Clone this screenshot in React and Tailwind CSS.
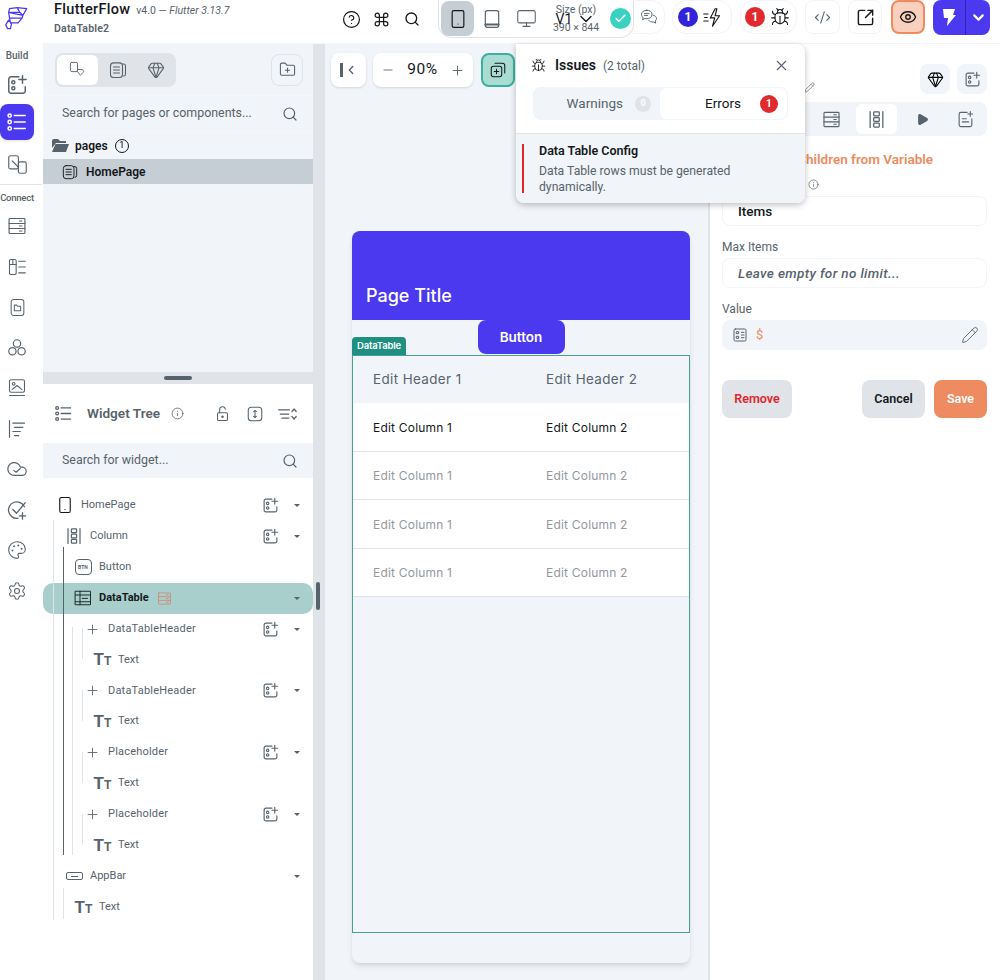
import React from "react";
import { Bug, ChevronDown, CircleHelp, CodeXml, Command, Eye, Gem, Minus, Monitor, Palette, Play, Plus, Search, Settings, Smartphone, Check, X, Info, Pencil, FolderPlus, SquareArrowOutUpRight } from "lucide-react";

const S = ({ size = 24, w = 1.6, className = "", children }) => (
  <svg width={size} height={size} viewBox="0 0 24 24" fill="none" stroke="currentColor" strokeWidth={w} strokeLinecap="round" strokeLinejoin="round" className={className}>{children}</svg>
);
const AddWidget = ({ size = 22, className = "text-[#57636c]" }) => (
  <S size={size} className={className}>
    <path d="M14 3H5.5A2.5 2.5 0 0 0 3 5.5v13A2.5 2.5 0 0 0 5.5 21h13a2.5 2.5 0 0 0 2.5-2.5V14" />
    <circle cx="8" cy="9" r="1.7" /><circle cx="8" cy="15.5" r="1.7" />
    <path d="M18 2v8M14 6h8" />
  </S>
);
const TreeList = ({ size = 24, className = "" }) => (
  <S size={size} className={className}>
    <circle cx="4" cy="5" r="1.8" /><circle cx="4" cy="12" r="1.8" /><circle cx="4" cy="19" r="1.8" />
    <path d="M9 5h12M9 12h12M9 19h12" />
  </S>
);
const Stack = ({ size = 24, className = "text-[#57636c]" }) => (
  <S size={size} className={className} w={1.4}>
    <rect x="2.5" y="3" width="19" height="18" rx="1" />
    <path d="M2.5 9h19M2.5 15h19M15 6h3M15 12h3M15 18h3" />
  </S>
);
const ColumnIcon = ({ size = 24, className = "text-[#57636c]" }) => (
  <S size={size} className={className}>
    <path d="M4 2v20M20 2v20" />
    <rect x="8.5" y="2.5" width="7" height="5" rx="1" /><rect x="8.5" y="9.5" width="7" height="5" rx="1" /><rect x="8.5" y="16.5" width="7" height="5" rx="1" />
  </S>
);
const PageDoc = ({ size = 18, className = "" }) => (
  <S size={size} w={1.4} className={className}>
    <path d="M18 4h1.5A2.5 2.5 0 0 1 22 6.5v11a2.5 2.5 0 0 1-2.5 2.5" />
    <rect x="2" y="2.5" width="16" height="19.5" rx="4" />
    <path d="M6 8h8M6 12h8M6 16h8" />
  </S>
);
const Tt = () => (
  <span className="flex w-[17px] items-baseline font-['Liberation_Sans',sans-serif] font-bold leading-none text-[#57636c]">
    <span className="text-[17px]">T</span><span className="text-[12px]">T</span>
  </span>
);
const Caret = () => <span className="h-0 w-0 border-x-[3px] border-t-[3px] border-x-transparent border-t-[#57636c]" />;
const Cell40 = ({ children }) => <div className="flex h-[40.5px] items-center">{children}</div>;

const Rail = () => (
  <aside className="flex w-[42px] shrink-0 flex-col items-center bg-white pr-[8px]">
    <div className="mr-[-8px] h-[44px] w-[42px] shrink-0 text-[#4b39ef]">
      <svg width="42" height="44" viewBox="0 0 44 44" fill="none" stroke="currentColor" strokeWidth="1.3" strokeLinejoin="round">
        <path d="M10 8l8-1 3 5H9ZM18 7l10 1-4 7-3-3ZM9 12l15 3-1 3H10ZM10 18h13l-4 5-8 0ZM9 20l3 4-1 5-3 0-2-4Z" />
      </svg>
    </div>
    <div className="mt-[5px] text-[10px] font-medium leading-[14px] text-[#57636c]">Build</div>
    <div className="mt-[3px] flex h-[38px] items-center"><AddWidget size={22} /></div>
    <div className="flex h-[36px] w-[34px] shrink-0 items-center justify-center rounded-lg bg-[#4b39ef] text-white shadow"><TreeList size={22} /></div>
    <div className="mt-[4px] flex h-[40px] items-center text-[#57636c]">
      <S size={21} w={1.3}><rect x="2" y="2" width="11" height="15" rx="2" /><rect x="13" y="9" width="9" height="13" rx="2" /><path d="M6 8l7 7" /></S>
    </div>
    <div className="mr-[-8px] w-[42px] shrink-0 border-t border-[#e0e3e7] pr-[8px] pt-[6px] text-center text-[9.5px] font-medium leading-[14px] tracking-tight text-[#57636c]">Connect</div>
    <div className="mt-[1px] flex flex-col items-center text-[#57636c]">
      <Cell40><Stack size={20} /></Cell40>
      <Cell40>
        <S size={20} w={1.3}><rect x="3" y="3" width="8" height="18" rx="1.5" /><path d="M3 9h8M7 3v6M14 5h8M14 12h8M14 19h8" /></S>
      </Cell40>
      <Cell40>
        <S size={19} w={1.3}><rect x="4" y="2" width="16" height="20" rx="3" /><path d="M8 9h3l1 1.5h4V16H8Z" /></S>
      </Cell40>
      <Cell40>
        <S size={22} w={1.3}><circle cx="12" cy="7" r="4" /><circle cx="7" cy="15.5" r="4" /><circle cx="17" cy="15.5" r="4" /></S>
      </Cell40>
      <Cell40>
        <S size={20} w={1.3}><rect x="3" y="2" width="18" height="15" rx="2" /><circle cx="8" cy="7" r="1.6" /><path d="M6 14l6-5 6 5M3 21h18" /></S>
      </Cell40>
      <Cell40>
        <S size={20} w={1.4}><path d="M3 2v20M7 5h14M9 10h10M7 15h9M9 20h5" /></S>
      </Cell40>
      <Cell40>
        <S size={22} w={1.3}><path d="M17.5 19H9a7 7 0 1 1 6.71-9h1.79a4.5 4.5 0 1 1 0 9Z" /><path d="m8.5 13.5 2.5 2 4.5-4" /></S>
      </Cell40>
      <Cell40>
        <S size={22} w={1.4}><path d="M20 8.5A9 9 0 1 0 13 21" /><path d="m7.5 11.5 4 4L21 4M18 15v7M14.5 18.5h7" /></S>
      </Cell40>
      <Cell40><Palette size={20} strokeWidth={1.3} /></Cell40>
      <Cell40><Settings size={20} strokeWidth={1.3} /></Cell40>
    </div>
  </aside>
);

const PillBase = ({ className = "", children }) => (
  <div className={`flex h-[34px] items-center rounded-[14px] border border-[#f1f4f8] ${className}`}>{children}</div>
);
const Num = ({ color, children }) => (
  <span className={`flex h-[20px] w-[20px] items-center justify-center rounded-full text-[12px] font-bold text-white ${color}`}>{children}</span>
);

const Header = () => (
  <header className="flex h-[44px] shrink-0 items-start border-b border-[#f1f4f8] bg-white text-[#14181b]">
    <div className="w-[300px] pl-[12px] pt-[1px]">
      <div className="flex items-baseline gap-[6px] leading-[18px]">
        <span className="text-[14.5px] font-medium tracking-[0.3px]">FlutterFlow</span>
        <span className="text-[10.5px] text-[#57636c]">v4.0 — <i>Flutter 3.13.7</i></span>
      </div>
      <div className="mt-[2px] text-[10.5px] font-semibold leading-[14px] tracking-[0.2px] text-[#57636c]">DataTable2</div>
    </div>
    <div className="flex h-[38px] items-center">
      <CircleHelp size={19} strokeWidth={1.5} />
      <Command size={17} strokeWidth={1.7} className="ml-[12px]" />
      <Search size={16} strokeWidth={2} className="ml-[14px]" />
    </div>
    <div className="ml-[18px] flex h-[38px] w-[196px] items-center rounded-b-[14px] border border-t-0 border-[#e0e3e7] pl-[2px]">
      <div className="flex h-[35px] w-[33px] items-center justify-center rounded-lg bg-[#c5cdd5]"><Smartphone size={20} strokeWidth={1.4} /></div>
      <div className="ml-[8px] text-[#57636c]">
        <S size={20} w={1.4}><rect x="4" y="2" width="16" height="20" rx="2.5" /><path d="M4 18.5h16" strokeWidth="2.5" /></S>
      </div>
      <Monitor size={21} strokeWidth={1.2} className="ml-[14px] text-[#57636c]" />
      <div className="relative ml-[12px] w-[54px] text-center text-[10.5px] leading-[10px] text-[#57636c]">
        <div>Size (px)</div>
        <div className="mt-[8px] whitespace-nowrap">390 × 844</div>
        <div className="absolute left-0 top-[4px] flex w-full items-center justify-center gap-[2px] text-[14px] leading-[14px] text-[#14181b]">
          <span className="mr-[2px]">V1</span><ChevronDown size={20} strokeWidth={1.6} />
        </div>
      </div>
      <div className="ml-[7px] flex h-[21px] w-[21px] items-center justify-center rounded-full bg-[#39d2c0] text-white"><Check size={13} strokeWidth={3} /></div>
    </div>
    <div className="ml-[-1px] flex h-[34px] w-[32px] items-center justify-center rounded-r-[14px] border-y border-r border-[#f1f4f8] text-[#57636c]">
      <S size={18} w={1.3}><path d="M9 3c-4 0-7 2.4-7 5.5 0 1.6.8 3 2 4l-.5 3 3-1.5c.8.2 1.6.3 2.5.3 4 0 7-2.4 7-5.8S13 3 9 3Z" /><path d="M17.5 9.5c2.6.6 4.5 2.4 4.5 4.5 0 1.2-.6 2.3-1.6 3.1l.4 3-3-1.5c-2.6.4-5-.5-6.3-2.2M6 7.5h6M6 10h4" /></S>
    </div>
    <PillBase className="ml-[7px] w-[60px] gap-[4px] pl-[5px]">
      <Num color="bg-[#3323d8]">1</Num>
      <S size={21} w={1.3}><path d="M15 2 9.5 12.5h5L12 22l8-12h-5l2-8ZM2 8h5M3 12h3M2 16h5" /></S>
    </PillBase>
    <PillBase className="ml-[8px] w-[57px] gap-[5px] pl-[4px]">
      <Num color="bg-[#e02a2e]">1</Num>
      <Bug size={20} strokeWidth={1.3} />
    </PillBase>
    <div className="ml-[8px] flex h-[34px] w-[35px] items-center justify-center rounded-lg border border-[#f1f4f8] text-[#57636c]"><CodeXml size={17} strokeWidth={1.5} /></div>
    <div className="ml-[8px] flex h-[34px] w-[34px] items-center justify-center rounded-lg border border-[#f1f4f8]"><SquareArrowOutUpRight size={19} strokeWidth={1.8} /></div>
    <div className="ml-[9px] flex h-[34px] w-[34px] items-center justify-center rounded-lg border-2 border-[#ee8b60] bg-[#f8d0bd]"><Eye size={18} strokeWidth={1.8} /></div>
    <div className="ml-[8px] flex h-[35px] w-[57px] items-center rounded-lg bg-[#4b39ef] text-white">
      <div className="flex h-full w-[33px] items-center justify-center border-r border-[#2f22b8]">
        <svg width="14" height="19" viewBox="0 0 14 19" fill="currentColor"><path d="M1 1h12l-2 6h3L5 18l1-8H2Z" /></svg>
      </div>
      <div className="flex flex-1 items-center justify-center"><ChevronDown size={17} strokeWidth={3} /></div>
    </div>
  </header>
);

const SearchRow = ({ text }) => (
  <div className="flex h-[35px] items-center justify-between bg-[#f1f4f8] pl-[19px] pr-[15px] text-[12.4px] text-[#57636c]">
    <span>{text}</span><Search size={16} strokeWidth={1.8} />
  </div>
);

const PagesPanel = () => (
  <div className="flex h-[328px] shrink-0 flex-col bg-[#f1f4f8]">
    <div className="flex h-[52px] items-center justify-between border-b border-[#f5f7fa] pl-[12px] pr-[10px]">
      <div className="flex h-[34px] w-[121px] items-center rounded-lg bg-[#e0e3e7] p-[2px] text-[#57636c]">
        <div className="flex h-[30px] w-[41px] items-center justify-center rounded-md bg-white">
          <S size={17} w={1.3}><rect x="2" y="2" width="10" height="13" rx="2" /><path d="M12 15l4 5 5-5-2-3h-6Z" /></S>
        </div>
        <PageDoc size={18} className="ml-[11px]" />
        <Gem size={18} strokeWidth={1.4} className="ml-[20px]" />
      </div>
      <div className="flex h-[32px] w-[32px] items-center justify-center rounded-lg border border-[#e0e3e7] text-[#57636c]"><FolderPlus size={17} strokeWidth={1.5} /></div>
    </div>
    <SearchRow text="Search for pages or components..." />
    <div className="flex h-[28px] items-center border-t border-[#f5f7fa] pl-[8px]">
      <svg width="18" height="16" viewBox="0 0 18 16"><path d="M1 3a2 2 0 0 1 2-2h4l2 2h6v2H5L1 10Z" fill="#57636c" /><path d="M4.5 6H18l-3 8H1Z" fill="#57636c" /></svg>
      <span className="ml-[6px] text-[12px] font-semibold text-[#14181b]">pages</span>
      <span className="ml-[7px] flex h-[14px] w-[14px] items-center justify-center rounded-full border border-[#14181b] text-[9px]">1</span>
    </div>
    <div className="flex h-[25px] items-center bg-[#c5cdd5] pl-[19px]">
      <PageDoc size={16} className="text-[#14181b]" />
      <span className="ml-[8px] text-[12px] font-semibold text-[#14181b]">HomePage</span>
    </div>
  </div>
);

const Row = ({ icon, label, indent, add, caret, active, bold, badge, small }) => (
  <div className={`flex h-[30.9px] items-center pr-[13px] ${active ? "rounded-[10px] bg-[#a9cfcc]" : ""}`} style={{ paddingLeft: indent }}>
    <div className="flex w-[18px] shrink-0 items-center justify-center">{icon}</div>
    <span className={`ml-[7px] text-[11px] ${bold ? "font-bold text-[#14181b]" : "text-[#57636c]"} ${small ? "tracking-[0.2px]" : ""}`}>{label}</span>
    {badge && <Stack size={15} className="ml-[8px] text-[#c98c76]" />}
    <div className="ml-auto flex items-center">
      {add && <AddWidget size={17} />}
      <div className="flex w-[21px] justify-end">{caret && <Caret />}</div>
    </div>
  </div>
);

const Tree = () => (
  <div className="flex-1 bg-white">
    <div className="flex h-[59px] items-center pl-[11px] pr-[16px] text-[#57636c]">
      <TreeList size={19} />
      <span className="ml-[14px] text-[13.6px] font-semibold">Widget Tree</span>
      <Info size={13} strokeWidth={1.5} className="ml-[11px]" />
      <S size={17} w={1.5} className="ml-[30px]">
        <rect x="5" y="11" width="14" height="11" rx="1.5" /><path d="M8 11V7a4 4 0 0 1 8-1" /><circle cx="12" cy="16.5" r="1" fill="currentColor" />
      </S>
      <S size={18} w={1.4} className="ml-[15px]">
        <rect x="3" y="3" width="18" height="18" rx="4" /><path d="M12 7v10M10 9l2-2 2 2M10 15l2 2 2-2" />
      </S>
      <S size={20} w={1.5} className="ml-auto">
        <path d="M2 7h13M4 12h10M6 17h8M18 9l2.5-3L23 9M18 15l2.5 3 2.5-3" />
      </S>
    </div>
    <SearchRow text="Search for widget..." />
    <div className="relative mt-[12px]">
      <div className="absolute left-[10px] top-[30px] h-[400px] w-px bg-[#e0e3e7]" />
      <div className="absolute left-[20px] top-[57px] z-10 h-[308px] w-px bg-[#57636c]" />
      <div className="absolute left-[29px] top-[137px] h-[228px] w-px bg-[#e0e3e7]" />
      <div className="absolute left-[20px] top-[398px] h-[31px] w-px bg-[#e0e3e7]" />
      {[138, 200, 262, 324].map((t) => (
        <div key={t} className="absolute left-[39px] h-[31px] w-px bg-[#e0e3e7]" style={{ top: t }} />
      ))}
      <Row indent={13} label="HomePage" add caret icon={<Smartphone size={20} strokeWidth={1.5} className="text-[#14181b]" />} />
      <Row indent={22} label="Column" add caret icon={<ColumnIcon size={18} />} />
      <Row indent={31} label="Button" icon={<span className="flex h-[16px] w-[17px] items-center justify-center rounded-[4px] border border-[#57636c] text-[5px] font-bold leading-none text-[#57636c]">BTN</span>} />
      <Row indent={31} label="DataTable" bold active caret badge icon={
        <S size={18} w={1.2} className="text-[#14181b]"><rect x="2" y="3" width="20" height="18" /><path d="M2 8h20M2 17h20M8 3v18M11 12.5h7" /></S>
      } />
      {["DataTableHeader", "DataTableHeader", "Placeholder", "Placeholder"].map((l, i) => (
        <React.Fragment key={i}>
          <Row indent={40} label={l} add caret small icon={<Plus size={15} strokeWidth={1.4} className="text-[#57636c]" />} />
          <Row indent={50} label="Text" icon={<Tt />} />
        </React.Fragment>
      ))}
      <Row indent={22} label="AppBar" caret icon={<span className="flex h-[8px] w-[17px] items-center justify-center rounded-[2px] border border-[#57636c]"><span className="h-px w-[7px] bg-[#57636c]" /></span>} />
      <Row indent={31} label="Text" icon={<Tt />} />
    </div>
  </div>
);

const LeftPanel = () => (
  <div className="flex w-[282px] shrink-0 bg-[#e0e3e7]">
    <div className="flex w-[270px] shrink-0 flex-col">
      <PagesPanel />
      <div className="flex h-[12px] shrink-0 items-center justify-center bg-[#e0e3e7]">
        <div className="h-[4px] w-[28px] rounded-full bg-[#57636c]" />
      </div>
      <Tree />
    </div>
    <div className="relative flex-1">
      <div className="absolute left-[3px] top-[538px] h-[28px] w-[4px] rounded-full bg-[#57636c]" />
    </div>
  </div>
);

const Cell = ({ children }) => <div className="w-[173px] shrink-0">{children}</div>;
const TableRow = ({ a, b, muted }) => (
  <div className={`flex h-[48.5px] items-center border-b border-[#e0e3e7] bg-white pl-[20px] pt-[2px] text-[12px] tracking-[0.2px] ${muted ? "text-[#94999f]" : "text-[#14181b]"}`}>
    <Cell>{a}</Cell><Cell>{b}</Cell>
  </div>
);

const Canvas = () => (
  <main className="flex w-[383px] shrink-0 flex-col bg-[#f1f4f8] pl-[6px] font-['Inter',sans-serif]">
    <div className="mt-[9px] flex items-center font-['Roboto',sans-serif]">
      <div className="flex h-[34px] w-[35px] items-center justify-center rounded-lg bg-white text-[#57636c] shadow-sm">
        <span className="h-[14px] w-[3px] bg-[#57636c]" />
        <S size={14} w={2.2} className="ml-[1px]"><path d="m15 6-6 6 6 6" /></S>
      </div>
      <div className="ml-[7px] flex h-[34px] w-[100px] items-center justify-between rounded-lg bg-white px-[8px] text-[#14181b] shadow-sm">
        <Minus size={14} strokeWidth={1.5} className="text-[#57636c]" />
        <span className="text-[15.5px] tracking-[0.5px]">90%</span>
        <Plus size={15} strokeWidth={1.5} className="text-[#57636c]" />
      </div>
      <div className="ml-[8px] flex h-[34px] w-[34px] items-center justify-center rounded-lg border-2 border-[#39b0a0] bg-[#a9dcd3] text-[#14181b]">
        <S size={18} w={1.4}><rect x="3" y="7" width="14" height="14" rx="3" /><path d="M8 3h10a3 3 0 0 1 3 3v10M10 11v6M7 14h6" /></S>
      </div>
    </div>
    <div className="ml-[21px] mt-[144px] flex h-[732px] w-[338px] flex-col rounded-lg bg-[#f1f4f8] shadow-md">
      <div className="flex h-[89px] shrink-0 items-end rounded-t-lg bg-[#4b39ef] pb-[12px] pl-[14px] text-[18px] font-medium leading-[24px] text-white">Page Title</div>
      <div className="relative h-[35px] shrink-0">
        <div className="mx-auto flex h-[34px] w-[87px] items-center justify-center rounded-lg bg-[#4b39ef] text-[13.5px] font-semibold text-white">Button</div>
        <div className="absolute bottom-0 left-0 flex h-[18px] w-[54px] items-center justify-center rounded-t bg-[#1e8f80] text-[9.5px] font-semibold tracking-[-0.2px] text-white">DataTable</div>
      </div>
      <div className="h-[578px] shrink-0 border-[1.5px] border-[#45a292]">
        <div className="flex h-[47px] items-center bg-[#f1f4f8] pl-[20px] text-[13.4px] tracking-[0.4px] text-[#57636c]">
          <Cell>Edit Header 1</Cell><Cell>Edit Header 2</Cell>
        </div>
        <TableRow a="Edit Column 1" b="Edit Column 2" />
        <TableRow a="Edit Column 1" b="Edit Column 2" muted />
        <TableRow a="Edit Column 1" b="Edit Column 2" muted />
        <TableRow a="Edit Column 1" b="Edit Column 2" muted />
      </div>
    </div>
  </main>
);

const Label = ({ children }) => <div className="text-[12px] leading-[16px] text-[#57636c]">{children}</div>;

const RightPanel = () => (
  <section className="flex-1 border-l-2 border-[#e0e3e7] bg-white pl-[12px] pr-[13px]">
    <div className="flex h-[58px] items-center justify-end gap-[7px] pt-[12px]">
      <Pencil size={11} strokeWidth={1.4} className="mr-[98px] mt-[16px] text-[#57636c]" />
      <div className="flex h-[30px] w-[30px] items-center justify-center rounded-lg bg-[#f1f4f8]"><Gem size={17} strokeWidth={1.6} /></div>
      <div className="flex h-[30px] w-[30px] items-center justify-center rounded-lg bg-[#f1f4f8]"><AddWidget size={17} /></div>
    </div>
    <div className="flex h-[34px] items-center justify-end rounded-lg bg-[#f1f4f8] pr-[12px] text-[#57636c]">
      <Stack size={19} />
      <div className="ml-[15px] flex h-[30px] w-[41px] items-center justify-center rounded-md bg-white"><ColumnIcon size={19} /></div>
      <Play size={13} fill="currentColor" className="ml-[19px]" />
      <S size={19} w={1.4} className="ml-[27px]"><path d="M14 3H6a2 2 0 0 0-2 2v14a2 2 0 0 0 2 2h12a2 2 0 0 0 2-2v-8M8 11h5M8 15h8M18 2v6M15 5h6" /></S>
    </div>
    <div className="mt-[15px] whitespace-nowrap pr-[54px] text-right text-[13.5px] font-semibold leading-[16px] text-[#ee8b60]">Generate Children from Variable</div>
    <div className="mt-[9px] flex h-[16px] items-center pl-[86px]">
      <Info size={11} strokeWidth={1.5} className="text-[#57636c]" />
    </div>
    <div className="mt-[4px] flex h-[30px] items-center rounded-lg border border-[#f1f4f8] pl-[15px] text-[13.5px] font-medium text-[#14181b]">Items</div>
    <div className="mt-[13px]"><Label>Max Items</Label></div>
    <div className="mt-[3px] flex h-[30px] items-center rounded-lg border border-[#f1f4f8] pl-[15px] text-[13.5px] font-medium italic tracking-[0.35px] text-[#57636c]">Leave empty for no limit...</div>
    <div className="mt-[13px]"><Label>Value</Label></div>
    <div className="mt-[3px] flex h-[30px] items-center rounded-lg bg-[#f1f4f8] pl-[10px] pr-[8px]">
      <S size={16} w={1.5} className="text-[#57636c]"><rect x="3" y="3" width="18" height="18" rx="2" /><path d="M7 7h3v3H7ZM7 14h3v3H7ZM14 8h4M14 12h4M14 16h4" /></S>
      <span className="ml-[8px] text-[13px] text-[#ee8b60]">$</span>
      <Pencil size={18} strokeWidth={1.2} className="ml-auto text-[#57636c]" />
    </div>
    <div className="mt-[30px] flex h-[38px] items-stretch text-[12.5px] font-semibold">
      <div className="flex w-[70px] items-center justify-center rounded-lg bg-[#e0e3e7] text-[#e0262c]">Remove</div>
      <div className="ml-auto flex w-[63px] items-center justify-center rounded-lg bg-[#e0e3e7] text-[#14181b]">Cancel</div>
      <div className="ml-[9px] flex w-[53px] items-center justify-center rounded-lg bg-[#ee8b60] text-white">Save</div>
    </div>
  </section>
);

const Issues = () => (
  <div className="absolute left-[516px] top-[44px] z-20 w-[289px] overflow-hidden rounded-b-lg rounded-tr-lg bg-white text-[#14181b] shadow-[0_2px_6px_rgba(0,0,0,0.25)]">
    <div className="flex h-[43px] items-center pl-[15px] pr-[15px]">
      <Bug size={15} strokeWidth={1.4} />
      <span className="ml-[9px] text-[14px] font-semibold">Issues</span>
      <span className="ml-[7px] text-[12px] text-[#57636c]">(2 total)</span>
      <X size={17} strokeWidth={1.5} className="ml-auto text-[#57636c]" />
    </div>
    <div className="mx-[17px] flex h-[33px] items-center rounded-lg bg-[#f1f4f8] text-[13.5px]">
      <div className="flex w-[126px] items-center justify-end pr-[8px] text-[#57636c]">
        <span>Warnings</span>
        <span className="ml-[12px] flex h-[16px] w-[16px] items-center justify-center rounded-full bg-[#e0e3e7] text-[9px] font-bold text-white">0</span>
      </div>
      <div className="flex h-full flex-1 items-center rounded-lg border border-[#f1f4f8] bg-white pl-[45px]">
        <span>Errors</span>
        <span className="ml-[19px] flex h-[18px] w-[18px] items-center justify-center rounded-full bg-[#e02a2e] text-[10px] font-bold text-white">1</span>
      </div>
    </div>
    <div className="mt-[13px] flex h-[70px] border-t border-[#e0e3e7] bg-[#f1f4f8] py-[10px] pl-[6px]">
      <div className="w-[2px] bg-[#e0262c]" />
      <div className="ml-[15px] w-[240px]">
        <div className="text-[12.5px] font-semibold leading-[14px] text-[#14181b]">Data Table Config</div>
        <div className="mt-[5px] text-[12.2px] leading-[16px] text-[#57636c]">Data Table rows must be generated dynamically.</div>
      </div>
    </div>
  </div>
);

export default function App() {
  return (
    <div className="relative flex h-[980px] w-[1000px] overflow-hidden bg-white font-['Roboto',sans-serif]">
      <Rail />
      <div className="flex min-w-0 flex-1 flex-col">
        <Header />
        <div className="flex min-h-0 flex-1 pl-px">
          <LeftPanel />
          <Canvas />
          <RightPanel />
        </div>
      </div>
      <Issues />
    </div>
  );
}
